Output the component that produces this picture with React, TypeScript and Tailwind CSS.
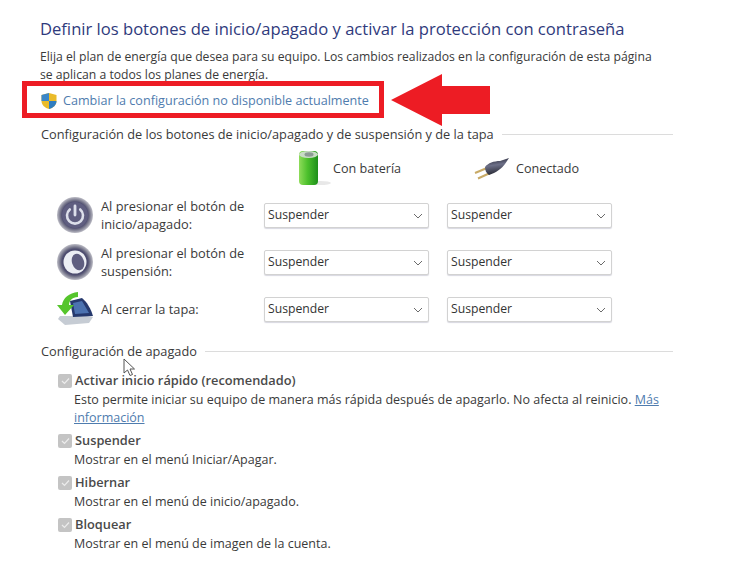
import React from "react";

const font = { fontFamily: '"Open Sans", "Noto Sans", sans-serif' };

function Shield() {
  return (
    <svg width="18" height="18" viewBox="0 0 18 18" className="shrink-0">
      <path d="M9 1 L16.5 3 V9 C16.5 13 13 16 9 17 C5 16 1.5 13 1.5 9 V3 Z" fill="#eabb2a" />
      <path d="M9 1 L1.5 3 V9 H9 Z" fill="#3a86c8" />
      <path d="M9 9 V17 C13 16 16.5 13 16.5 9 Z" fill="#2f7dc0" />
    </svg>
  );
}

function Battery() {
  return (
    <svg width="34" height="38" viewBox="0 0 34 38" className="shrink-0">
      <defs>
        <linearGradient id="bat" x1="0" x2="1" y1="0" y2="0">
          <stop offset="0" stopColor="#8fdc5a" />
          <stop offset="0.45" stopColor="#4cc02c" />
          <stop offset="1" stopColor="#1d8f1a" />
        </linearGradient>
      </defs>
      <ellipse cx="22" cy="33" rx="11" ry="2" fill="#e8e8e8" />
      <rect x="1" y="1" width="19" height="34" rx="4" fill="url(#bat)" />
      <ellipse cx="10.5" cy="4.5" rx="9.5" ry="3.5" fill="#c8dcc4" />
      <ellipse cx="11" cy="4.5" rx="4.5" ry="2.2" fill="#8c9a94" />
    </svg>
  );
}

function Plug() {
  return (
    <svg width="36" height="22" viewBox="0 0 36 22" className="shrink-0">
      <defs>
        <linearGradient id="plug" x1="0.4" x2="0.6" y1="0" y2="1">
          <stop offset="0" stopColor="#2a2b3a" />
          <stop offset="0.4" stopColor="#6d7088" />
          <stop offset="1" stopColor="#20212a" />
        </linearGradient>
      </defs>
      <path d="M1 15 L13 10" stroke="#c8aa66" strokeWidth="2" />
      <path d="M4 20.5 L16 15" stroke="#c8aa66" strokeWidth="2" />
      <path d="M11 9 C14 5 20 3 26 3 L35 0 L31 6 C28 10 22 15 15 17 C12 15 11 12 11 9 Z" fill="url(#plug)" />
    </svg>
  );
}

function RoundBase({ id, children }: { id: string; children: React.ReactNode }) {
  return (
    <svg width="36" height="36" viewBox="0 0 36 36" className="shrink-0">
      <defs>
        <radialGradient id={id} cx="0.5" cy="0.5" r="0.5">
          <stop offset="0.72" stopColor="#4f4e70" />
          <stop offset="0.82" stopColor="#75758a" />
          <stop offset="1" stopColor="#bdbdc6" />
        </radialGradient>
      </defs>
      <circle cx="18" cy="18" r="18" fill={`url(#${id})`} />
      {children}
    </svg>
  );
}

function PowerIcon() {
  return (
    <RoundBase id="rg1">
      <circle cx="18" cy="18" r="13" fill="#5f5e80" />
      <path d="M12.8 12.5 A8 8 0 1 0 23.2 12.5" fill="none" stroke="#dcdfea" strokeWidth="2.6" strokeLinecap="round" />
      <path d="M18 9 V18" stroke="#dcdfea" strokeWidth="2.8" strokeLinecap="round" />
    </RoundBase>
  );
}

function MoonIcon() {
  return (
    <RoundBase id="rg2">
      <circle cx="18" cy="18" r="11.5" fill="#eceef4" />
      <ellipse cx="21" cy="18" rx="6" ry="8.5" fill="#5f5e80" transform="rotate(-18 21 18)" />
    </RoundBase>
  );
}

function LidIcon() {
  return (
    <svg width="36" height="34" viewBox="0 0 36 34" className="shrink-0">
      <path d="M1 27 L3 24 L30 24 L36 25 L32 31 L8 33 Z" fill="#c6ccd4" />
      <path d="M13 9 L25 6 C30 10 34 17 36 24 L16 25 Z" fill="#26396e" />
      <path d="M16 11 L25 9 L32 21 L18 22 Z" fill="#4c72b0" />
      <path d="M21 0 L21 5 C15 5 12 9 12 13 L17 13 L8 23 L0 13 L5 13 C6 6 12 1 21 0 Z" fill="#55c52c" />
    </svg>
  );
}

function Chevron() {
  return (
    <svg width="10" height="6" viewBox="0 0 10 6" className="shrink-0">
      <path d="M1 1 L5 5 L9 1" fill="none" stroke="#6b6b6b" strokeWidth="1" />
    </svg>
  );
}

function Select() {
  return (
    <div className="w-[165px] h-[25px] mt-[2px] flex items-center justify-between pl-[3px] pr-[5px] bg-white border border-[#d2d2d2] rounded-[2px] shadow-[0_1px_1px_#d8d8e0] text-[12.2px] text-[#333333]">
      <span>Suspender</span>
      <Chevron />
    </div>
  );
}

function Row({ icon, label }: { icon: React.ReactNode; label: React.ReactNode }) {
  return (
    <div className="flex items-center h-[47px]">
      <div className="w-[36px] ml-[17px] flex justify-center">{icon}</div>
      <div className="w-[163px] ml-[8px] text-[12.8px] leading-[18px] text-[#3a3a3a]">{label}</div>
      <Select />
      <div className="w-[18px]" />
      <Select />
    </div>
  );
}

function SectionHead({ text }: { text: string }) {
  return (
    <div className="flex items-center text-[12.75px] leading-[18px] text-[#3a3a3a] w-[632px] ml-[1px]">
      <span className="whitespace-nowrap">{text}</span>
      <div className="flex-1 h-[1px] ml-[8px] bg-[#dcdcdc]" />
    </div>
  );
}

function Check({ label, children, className }: { label: string; children: React.ReactNode; className: string }) {
  return (
    <div className={`flex ${className}`}>
      <div className="w-[14px] h-[14px] mt-[3px] ml-[18px] rounded-[2px] bg-[#c4c4c4] flex items-center justify-center shrink-0">
        <svg width="9" height="8" viewBox="0 0 9 8">
          <path d="M1 4 L3.5 6.5 L8 1.5" fill="none" stroke="#ececec" strokeWidth="1.2" />
        </svg>
      </div>
      <div className="ml-[3px] w-[600px]">
        <div className="text-[12.8px] leading-[18px] font-semibold text-[#4a4a4a]">{label}</div>
        <div className="text-[12.5px] leading-[18px] mt-[2px] -ml-[1px] text-[#3a3a3a]">{children}</div>
      </div>
    </div>
  );
}

export default function App() {
  return (
    <div className="relative w-[748px] h-[576px] bg-white overflow-hidden" style={font}>
      <div className="pl-[40px] pt-[17px]">
        <h1 className="text-[16.6px] leading-[24px] font-normal text-[#2f3a7c] whitespace-nowrap">
          Definir los botones de inicio/apagado y activar la protección con contraseña
        </h1>
        <p className="mt-[7px] text-[12.2px] leading-[18px] text-[#3a3a3a] w-[620px]">
          Elija el plan de energía que desea para su equipo. Los cambios realizados en la configuración de esta página se aplican a todos los planes de energía.
        </p>
      </div>

      <div className="relative ml-[22px] mt-[-3px] w-[362px] h-[37px] border-[5px] border-[#ed1c24] flex items-center pl-[13px] pt-[3px] gap-[5px]">
        <Shield />
        <span className="text-[12.6px] text-[#4f7cae] whitespace-nowrap">Cambiar la configuración no disponible actualmente</span>
        <svg width="100" height="53" viewBox="0 0 100 53" className="absolute left-[364px] top-[-12px]">
          <path d="M0 26 L51 0 V12 H99 V40 H51 V52 Z" fill="#ed1c24" />
        </svg>
      </div>

      <div className="pl-[40px] mt-[7px]">
        <SectionHead text="Configuración de los botones de inicio/apagado y de suspensión y de la tapa" />
        <div className="flex items-center h-[38px] mt-[7px] text-[12.6px] text-[#3a3a3a]">
          <div className="ml-[258px] w-[35px]"><Battery /></div>
          <span className="w-[141px] whitespace-nowrap">Con batería</span>
          <Plug />
          <span className="ml-[6px] whitespace-nowrap">Conectado</span>
        </div>
        <div className="mt-[3px]">
          <Row icon={<PowerIcon />} label={<>Al presionar el botón de inicio/apagado:</>} />
          <Row icon={<MoonIcon />} label={<>Al presionar el botón de suspensión:</>} />
          <Row icon={<LidIcon />} label="Al cerrar la tapa:" />
        </div>
        <div className="mt-[10px]">
          <SectionHead text="Configuración de apagado" />
        </div>
        <Check label="Activar inicio rápido (recomendado)" className="mt-[11px]">
          Esto permite iniciar su equipo de manera más rápida después de apagarlo. No afecta al reinicio.{" "}
          <span className="text-[#4f7cae] underline">Más</span>
          <br />
          <span className="text-[#4f7cae] underline">información</span>
        </Check>
        <Check label="Suspender" className="mt-[4px]">Mostrar en el menú Iniciar/Apagar.</Check>
        <Check label="Hibernar" className="mt-[4px]">Mostrar en el menú de inicio/apagado.</Check>
        <Check label="Bloquear" className="mt-[4px]">Mostrar en el menú de imagen de la cuenta.</Check>
      </div>

      <svg width="14" height="19" viewBox="0 0 14 19" className="absolute left-[123px] top-[358px]">
        <path d="M1 1 V15 L4.5 12 L7 17.5 L9.5 16.5 L7 11 H11.5 Z" fill="#ffffff" stroke="#555555" strokeWidth="1" />
      </svg>
    </div>
  );
}
